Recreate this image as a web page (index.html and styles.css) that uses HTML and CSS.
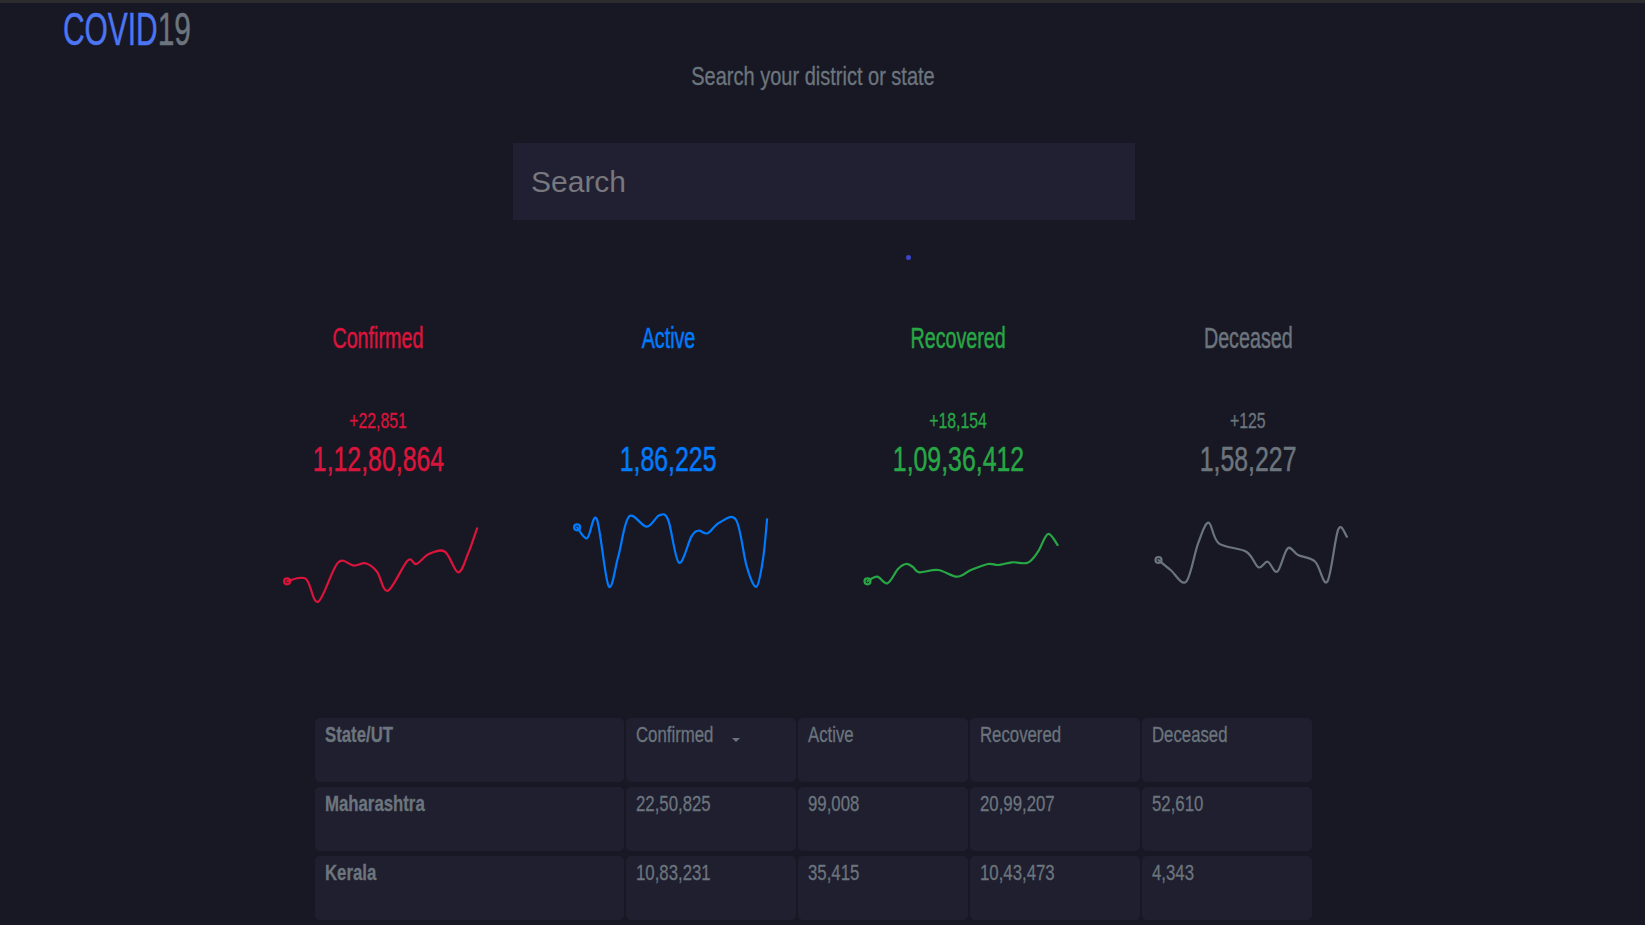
FILE: index.html
```html
<!DOCTYPE html>
<html lang="en">
<head>
<meta charset="utf-8">
<title>COVID19 Tracker</title>
<link rel="stylesheet" href="styles.css">
</head>
<body>
<header class="topbar">
  <div class="logo"><span class="logo-covid">COVID</span><span class="logo-num">19</span></div>
</header>
<main class="main">
  <p class="subtitle">Search your district or state</p>
  <div class="search-row">
    <input class="search" type="text" placeholder="Search">
  </div>
  <div class="loader-dot"></div>

  <section class="stats">
    <div class="stat stat-confirmed">
      <h5 class="stat-title">Confirmed</h5>
      <div class="stat-delta">+22,851</div>
      <div class="stat-total">1,12,80,864</div>
      <svg class="spark" width="210" height="105" viewBox="273 505 210 105" data-points="287.1,581.3 305.7,578.7 318.2,601.7 337.9,562.7 353.9,565.7 365.7,563.3 377,571.7 387.9,590.7 407.5,560.7 416.4,564 428.9,554 445,551.7 458.2,572.3 468.2,553.3 477.1,528.3"></svg>
    </div>
    <div class="stat stat-active">
      <h5 class="stat-title">Active</h5>
      <div class="stat-delta"></div>
      <div class="stat-total">1,86,225</div>
      <svg class="spark" width="210" height="105" viewBox="563 505 210 105" data-points="577.1,527.3 587.1,538.3 596.8,519 608.6,586 618.2,556.7 628.9,516.7 646.8,526.7 659.3,515.3 668.2,520 678.9,562.7 691.4,536.7 698.6,530.7 707.5,533.3 719.3,522.7 736.1,520 746.8,566.7 756.4,586.7 762.9,560 767.1,519.3"></svg>
    </div>
    <div class="stat stat-recovered">
      <h5 class="stat-title">Recovered</h5>
      <div class="stat-delta">+18,154</div>
      <div class="stat-total">1,09,36,412</div>
      <svg class="spark" width="210" height="105" viewBox="853 505 210 105" data-points="867.5,581.3 877.2,576.7 887.5,583.3 898,569 906,564 913,567 919.2,572.3 938.1,570 957.1,576.7 970.9,570 988.1,564 998.4,565 1012.2,562.3 1027.7,562.7 1038,551.7 1048,534 1057.6,545"></svg>
    </div>
    <div class="stat stat-deceased">
      <h5 class="stat-title">Deceased</h5>
      <div class="stat-delta">+125</div>
      <div class="stat-total">1,58,227</div>
      <svg class="spark" width="210" height="105" viewBox="1143 505 210 105" data-points="1158.5,560 1170.6,570 1186.1,581.7 1198.1,543.3 1208.5,522.7 1218.8,543.3 1246.3,551.7 1258.4,567.3 1267.7,561.7 1277.3,571.7 1287.7,548.3 1298,555 1315.2,561.7 1327.3,581.7 1338.3,529.3 1346.9,536.7"></svg>
    </div>
  </section>

  <section class="table-wrap">
    <table class="states">
      <thead>
        <tr>
          <th class="col-state"><span class="cell-text">State/UT</span></th>
          <th class="col-num"><span class="cell-text">Confirmed</span><span class="sort-caret"></span></th>
          <th class="col-num"><span class="cell-text">Active</span></th>
          <th class="col-num"><span class="cell-text">Recovered</span></th>
          <th class="col-num"><span class="cell-text">Deceased</span></th>
        </tr>
      </thead>
      <tbody>
        <tr>
          <td class="state-name"><span class="cell-text">Maharashtra</span></td>
          <td><span class="cell-text">22,50,825</span></td>
          <td><span class="cell-text">99,008</span></td>
          <td><span class="cell-text">20,99,207</span></td>
          <td><span class="cell-text">52,610</span></td>
        </tr>
        <tr>
          <td class="state-name"><span class="cell-text">Kerala</span></td>
          <td><span class="cell-text">10,83,231</span></td>
          <td><span class="cell-text">35,415</span></td>
          <td><span class="cell-text">10,43,473</span></td>
          <td><span class="cell-text">4,343</span></td>
        </tr>
      </tbody>
    </table>
  </section>
</main>
<script src="script.js"></script>
</body>
</html>
```

FILE: styles.css
```css
* {
  box-sizing: border-box;
}

html,
body {
  margin: 0;
  padding: 0;
}

body {
  background: #181824;
  border-top: 3px solid #2c2c2f;
  color: #6c757d;
  font-family: "Liberation Sans", Arial, sans-serif;
  overflow: hidden;
}

.topbar {
  padding: 1px 0 0 63px;
}

.logo {
  font-size: 46px;
  line-height: 50px;
  transform: scaleX(0.65);
  transform-origin: left center;
  -webkit-text-stroke: 0.5px currentColor;
}

.logo-covid {
  color: #4c75f2;
}

.logo-num {
  color: #6c757d;
}

.main {
  padding-right: 19px;
}

.subtitle {
  margin: 7px 0 0;
  text-align: center;
  font-size: 25px;
  line-height: 30px;
  color: #6c757d;
  transform: scaleX(0.8);
  -webkit-text-stroke: 0.3px currentColor;
}

.search-row {
  display: flex;
  justify-content: center;
  margin: 52px -22px 0 0;
}

.search {
  width: 622px;
  height: 77px;
  padding: 0 18px;
  border: none;
  outline: none;
  background: #202032;
  color: #9a9aa6;
  font-family: "Liberation Sans", Arial, sans-serif;
  font-size: 30px;
}

.search::placeholder {
  color: #77777d;
}

.loader-dot {
  width: 5px;
  height: 5px;
  margin: 35px 0 0 calc(50% + 93px);
  border-radius: 50%;
  background: #3b46c9;
}

.stats {
  display: flex;
  width: 1160px;
  margin: 61px auto 0;
}

.stat {
  flex: 0 0 290px;
  display: flex;
  flex-direction: column;
  align-items: center;
}

.stat-title {
  margin: 0;
  font-size: 29px;
  line-height: 34px;
  font-weight: normal;
  transform: scaleX(0.68);
  -webkit-text-stroke: 0.5px currentColor;
}

.stat-delta {
  height: 26px;
  margin-top: 53px;
  font-size: 22px;
  line-height: 26px;
  transform: scaleX(0.72);
  -webkit-text-stroke: 0.3px currentColor;
}

.stat-total {
  margin-top: 5px;
  font-size: 35px;
  line-height: 40px;
  transform: scaleX(0.71);
  -webkit-text-stroke: 0.5px currentColor;
}

.spark {
  display: block;
  margin-top: 26px;
  fill: none;
  stroke: currentColor;
  stroke-width: 2.2;
  stroke-linecap: round;
  stroke-linejoin: round;
  overflow: visible;
}

.stat-confirmed {
  color: #dc143c;
}

.stat-active {
  color: #007bff;
}

.stat-recovered {
  color: #28a745;
}

.stat-deceased {
  color: #6c757d;
}

.table-wrap {
  display: flex;
  justify-content: center;
  margin-top: 103px;
}

.states {
  border-collapse: separate;
  border-spacing: 2.5px 5px;
  color: #6c757d;
  font-size: 21.5px;
}

.states th,
.states td {
  height: 64px;
  padding: 5px 10px;
  background: #1f1f30;
  border-radius: 5px;
  text-align: left;
  vertical-align: top;
  font-weight: normal;
  line-height: 24px;
  white-space: nowrap;
}

.states .col-state,
.states .state-name {
  width: 309px;
  font-weight: bold;
}

.states .col-num {
  width: 170px;
}

.cell-text {
  display: inline-block;
  transform: scaleX(0.78);
  transform-origin: left center;
  -webkit-text-stroke: 0.3px currentColor;
}

.sort-caret {
  display: inline-block;
  width: 0;
  height: 0;
  margin-left: -3px;
  vertical-align: 0;
  border-left: 4px solid transparent;
  border-right: 4px solid transparent;
  border-top: 4px solid #6c757d;
}
```

FILE: script.js
```js
(function () {
  var NS = "http://www.w3.org/2000/svg";
  document.querySelectorAll(".spark").forEach(function (svg) {
    var pts = svg.getAttribute("data-points").trim().split(/\s+/).map(function (p) {
      return p.split(",").map(Number);
    });
    var d = "M" + pts[0][0] + " " + pts[0][1];
    for (var i = 0; i < pts.length - 1; i++) {
      var p0 = pts[i - 1] || pts[i];
      var p1 = pts[i];
      var p2 = pts[i + 1];
      var p3 = pts[i + 2] || p2;
      var c1x = p1[0] + (p2[0] - p0[0]) / 6;
      var c1y = p1[1] + (p2[1] - p0[1]) / 6;
      var c2x = p2[0] - (p3[0] - p1[0]) / 6;
      var c2y = p2[1] - (p3[1] - p1[1]) / 6;
      d += " C" + c1x.toFixed(2) + " " + c1y.toFixed(2) + " " + c2x.toFixed(2) + " " + c2y.toFixed(2) + " " + p2[0] + " " + p2[1];
    }
    var path = document.createElementNS(NS, "path");
    path.setAttribute("d", d);
    svg.appendChild(path);
    var dot = document.createElementNS(NS, "circle");
    dot.setAttribute("cx", pts[0][0]);
    dot.setAttribute("cy", pts[0][1]);
    dot.setAttribute("r", "3");
    svg.appendChild(dot);
  });
})();
```
